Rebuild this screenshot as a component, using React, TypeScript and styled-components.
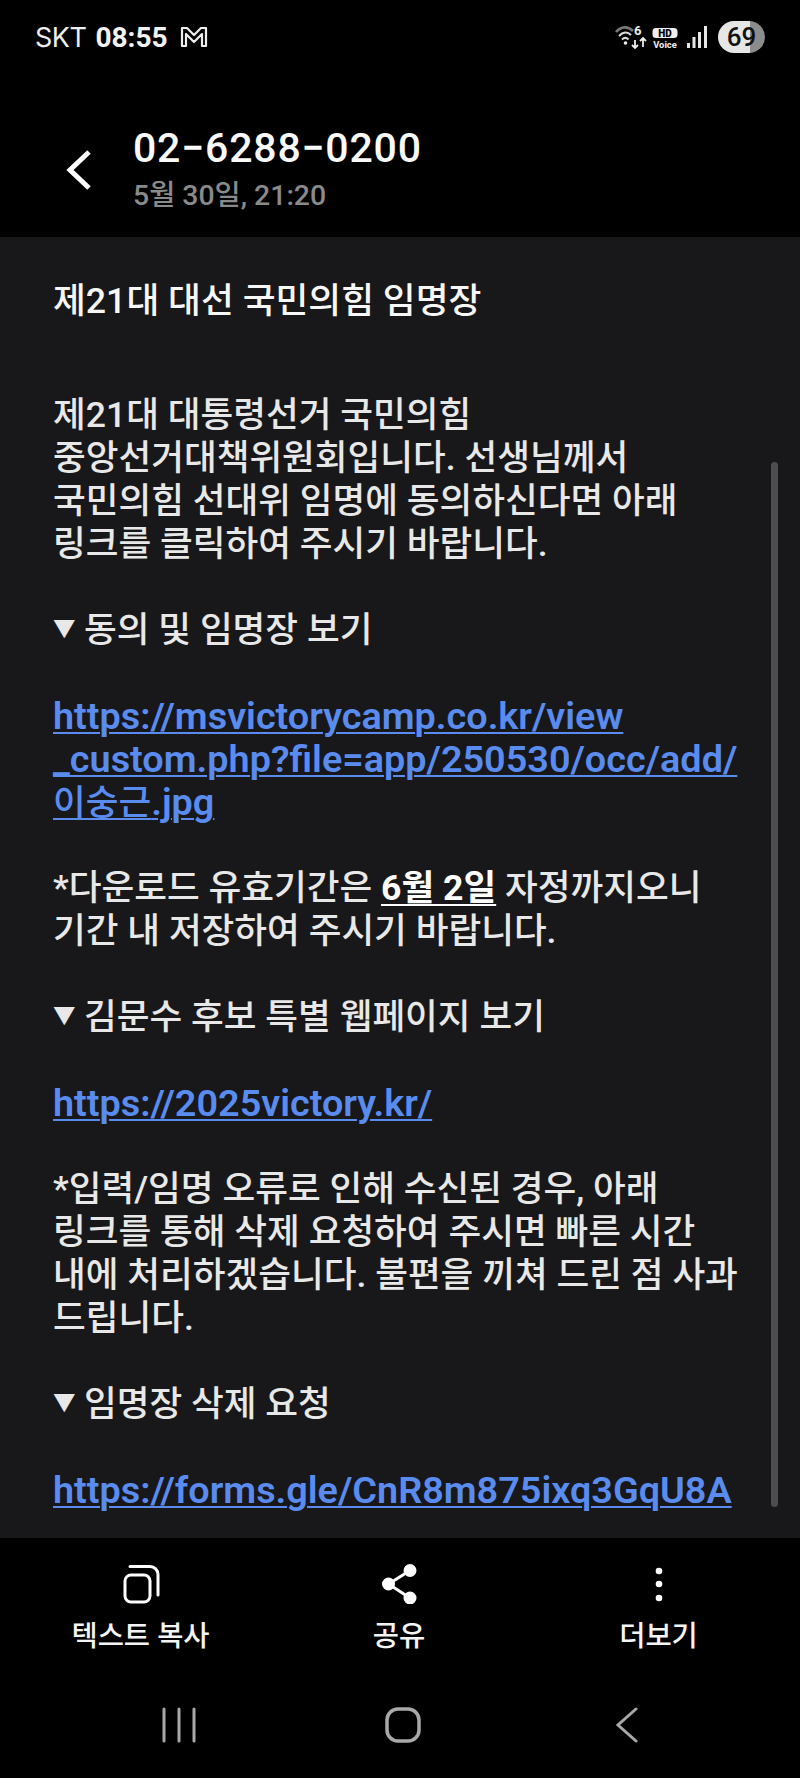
import React from "react";
import styled, { createGlobalStyle } from "styled-components";

const Global = createGlobalStyle`
  html, body { margin: 0; padding: 0; background: #000; }
  body { font-family: Roboto, "Noto Sans CJK KR", sans-serif; }
`;
const Screen = styled.div`
  width: 800px; height: 1778px; background: #000; display: flex; flex-direction: column; overflow: hidden; color: #fff;
`;
const StatusBar = styled.div`
  height: 74px; flex: none; display: flex; align-items: center; justify-content: space-between; padding: 0 35px 0 35px; box-sizing: border-box;
`;
const StatusGroup = styled.div`display: flex; align-items: center;`;
const Carrier = styled.span`font: 400 27px Inter, Roboto, sans-serif; color: #eee; letter-spacing: -0.5px;`;
const Clock = styled.span`font: 700 28px Roboto, sans-serif; margin-left: 9px; color: #f2f2f2;`;
const Battery = styled.div`
  width: 47px; height: 32px; border-radius: 16px; margin-left: 11px; color: #111;
  background: linear-gradient(90deg, #e6e6e6 0 68%, #8c8c8c 68% 100%);
  display: flex; align-items: center; justify-content: center; font: 500 26px Roboto, sans-serif;
`;
const Header = styled.header`
  height: 163px; flex: none; display: flex; align-items: flex-start; padding: 52px 0 0 64px; box-sizing: border-box;
`;
const BackButton = styled.div`width: 30px; height: 44px; margin: 22px 39px 0 0; flex: none;`;
const HeaderText = styled.div`display: flex; flex-direction: column;`;
const Phone = styled.div`font: 500 41px/44px Roboto, sans-serif; color: #fafafa; letter-spacing: 0.8px;`;
const Timestamp = styled.div`font: 500 28.4px/34px Roboto, "Noto Sans CJK KR", sans-serif; color: #8a8a8a; margin-top: 9px;`;
const Body = styled.main`
  position: relative; height: 1301px; flex: none; background: #18181a; padding: 35px 0 0 53px; box-sizing: border-box; overflow: hidden;
`;
const Title = styled.h1`margin: 0 0 64px; font: 500 35.7px/58px Roboto, "Noto Sans CJK KR", sans-serif; color: #f7f7f7;`;
const Message = styled.div`font: 500 35.6px/43px Roboto, "Noto Sans CJK KR", sans-serif; color: #e8e8e8;`;
const Line = styled.div`height: 43px; white-space: nowrap;`;
const LinkText = styled.a`color: #5a8cf0; font-size: 37.8px; font-weight: 600; text-decoration: underline; text-decoration-thickness: 2px; text-underline-offset: 3px;`;
const LinkHangul = styled.span`font-size: 35.6px; font-weight: 500;`;
const Strong = styled.span`color: #fff; font-weight: 700; text-decoration: underline; text-decoration-thickness: 2px; text-underline-offset: 4px;`;
const Marker = styled.span`font-size: 22.5px; display: inline-block; width: 31px; position: relative; top: -5px;`;
const Scrollbar = styled.div`
  position: absolute; right: 22px; top: 225px; width: 7px; height: 1045px; border-radius: 4px; background: #4d4d4f;
`;
const Actions = styled.nav`height: 136px; flex: none; display: grid; grid-template-columns: 281px 236px 283px; padding-top: 24px; box-sizing: border-box;`;
const Action = styled.div`display: flex; flex-direction: column; align-items: center; gap: 16px;`;
const ActionIcon = styled.svg`width: 40px; height: 42px; display: block;`;
const ActionLabel = styled.span`font: 500 28.5px/34px Roboto, "Noto Sans CJK KR", sans-serif; color: #f4f4f4;`;
const NavBar = styled.div`flex: 1; display: flex; justify-content: center; align-items: flex-start; padding: 33px 0 0 5px;`;
const NavSlot = styled.div`width: 224px; display: flex; justify-content: center;`;

const lines: React.ReactNode[] = [
  "제21대 대통령선거 국민의힘",
  "중앙선거대책위원회입니다. 선생님께서",
  "국민의힘 선대위 임명에 동의하신다면 아래",
  "링크를 클릭하여 주시기 바랍니다.",
  "",
  <><Marker>▼</Marker>동의 및 임명장 보기</>,
  "",
  <LinkText>https://msvictorycamp.co.kr/view</LinkText>,
  <LinkText>_custom.php?file=app/250530/occ/add/</LinkText>,
  <LinkText><LinkHangul>이숭근</LinkHangul>.jpg</LinkText>,
  "",
  <>*다운로드 유효기간은 <Strong>6월 2일</Strong> 자정까지오니</>,
  "기간 내 저장하여 주시기 바랍니다.",
  "",
  <><Marker>▼</Marker>김문수 후보 특별 웹페이지 보기</>,
  "",
  <LinkText>https://2025victory.kr/</LinkText>,
  "",
  "*입력/임명 오류로 인해 수신된 경우, 아래",
  "링크를 통해 삭제 요청하여 주시면 빠른 시간",
  "내에 처리하겠습니다. 불편을 끼쳐 드린 점 사과",
  "드립니다.",
  "",
  <><Marker>▼</Marker>임명장 삭제 요청</>,
  "",
  <LinkText>https://forms.gle/CnR8m875ixq3GqU8A</LinkText>,
];

export default function App() {
  return (
    <Screen>
      <Global />
      <StatusBar>
        <StatusGroup>
          <Carrier>SKT</Carrier>
          <Clock>08:55</Clock>
          <svg width="28" height="22" viewBox="0 0 28 22" style={{ marginLeft: 12 }} fill="none" stroke="#eee" strokeWidth="2.2" strokeLinejoin="round">
            <path d="M2 20V2h5l7 7 7-7h5v18h-4V8l-8 8-8-8v12z" />
          </svg>
        </StatusGroup>
        <StatusGroup>
          <svg width="32" height="30" viewBox="0 -3 32 30" fill="none">
            <path d="M1 7C6 1 13 1 18 6" stroke="#777" strokeWidth="2.6" />
            <path d="M4 11C8 6.500 12.500 6.500 16 10" stroke="#ddd" strokeWidth="2" />
            <path d="M7 14.500c2-2 4.500-2 6.500 0" stroke="#ddd" strokeWidth="2" />
            <circle cx="10.500" cy="18" r="1.800" fill="#eee" />
            <path d="M20 15v8m-3-3 3 3 3-3M28 22v-9m-3 3 3-3 3 3" stroke="#eee" strokeWidth="1.800" />
            <text x="19" y="10" fill="#eee" fontSize="13" fontWeight="700" fontFamily="Roboto">6</text>
          </svg>
          <svg width="26" height="30" viewBox="0 -3 26 30" style={{ marginLeft: 5 }}>
            <rect x="0.500" y="3" width="25" height="10" rx="3.500" fill="#eee" />
            <text x="13" y="11.800" textAnchor="middle" fontSize="10" fontWeight="900" fontFamily="Roboto" fill="#000">HD</text>
            <text x="13" y="22.500" textAnchor="middle" fontSize="9.400" fontWeight="700" fontFamily="Roboto" fill="#eee">Voice</text>
          </svg>
          <svg width="20" height="22" viewBox="0 0 20 22" style={{ marginLeft: 9 }} fill="#e6e6e6">
            <rect x="0" y="17" width="3" height="5" />
            <rect x="5.500" y="11" width="3" height="11" />
            <rect x="11" y="6" width="3" height="16" />
            <rect x="17" y="0" width="3" height="22" />
          </svg>
          <Battery>69</Battery>
        </StatusGroup>
      </StatusBar>
      <Header>
        <BackButton>
          <svg width="30" height="44" viewBox="0 0 30 44" fill="none" stroke="#fff" strokeWidth="5">
            <path d="M25 4 6 22l19 18" />
          </svg>
        </BackButton>
        <HeaderText>
          <Phone>02−6288−0200</Phone>
          <Timestamp>5월 30일, 21:20</Timestamp>
        </HeaderText>
      </Header>
      <Body>
        <Title>제21대 대선 국민의힘 임명장</Title>
        <Message>
          {lines.map((l, i) => (
            <Line key={i}>{l}</Line>
          ))}
        </Message>
        <Scrollbar />
      </Body>
      <Actions>
        <Action>
          <ActionIcon viewBox="0 0 40 42" fill="none" stroke="#fff" strokeWidth="3">
            <rect x="4" y="13" width="25" height="27" rx="6" />
            <path d="M9 4.500h20a8 8 0 0 1 8 8V33" strokeLinecap="round" />
          </ActionIcon>
          <ActionLabel>텍스트 복사</ActionLabel>
        </Action>
        <Action>
          <ActionIcon viewBox="0 0 40 42" fill="#fff" stroke="#fff" strokeWidth="3">
            <path d="M31 8.500 9.500 22 31 36" fill="none" />
            <circle cx="31" cy="8.500" r="5" />
            <circle cx="9.500" cy="22" r="5" />
            <circle cx="31" cy="36" r="5" />
          </ActionIcon>
          <ActionLabel>공유</ActionLabel>
        </Action>
        <Action>
          <ActionIcon viewBox="0 0 40 42" fill="#fff">
            <circle cx="20" cy="9" r="3.300" />
            <circle cx="20" cy="22" r="3.300" />
            <circle cx="20" cy="36" r="3.300" />
          </ActionIcon>
          <ActionLabel>더보기</ActionLabel>
        </Action>
      </Actions>
      <NavBar>
        <NavSlot>
          <svg width="34" height="36" viewBox="0 0 34 36" stroke="#a8a8a8" strokeWidth="3" strokeLinecap="round">
            <path d="M2 2v32M17 2v32M32 2v32" />
          </svg>
        </NavSlot>
        <NavSlot>
          <svg width="36" height="36" viewBox="0 0 36 36" fill="none" stroke="#a8a8a8" strokeWidth="3.500">
            <rect x="2" y="2" width="32" height="32" rx="11" />
          </svg>
        </NavSlot>
        <NavSlot>
          <svg width="24" height="36" viewBox="0 0 24 36" fill="none" stroke="#a8a8a8" strokeWidth="3" strokeLinecap="round">
            <path d="M21 2 3 18l18 16" />
          </svg>
        </NavSlot>
      </NavBar>
    </Screen>
  );
}
